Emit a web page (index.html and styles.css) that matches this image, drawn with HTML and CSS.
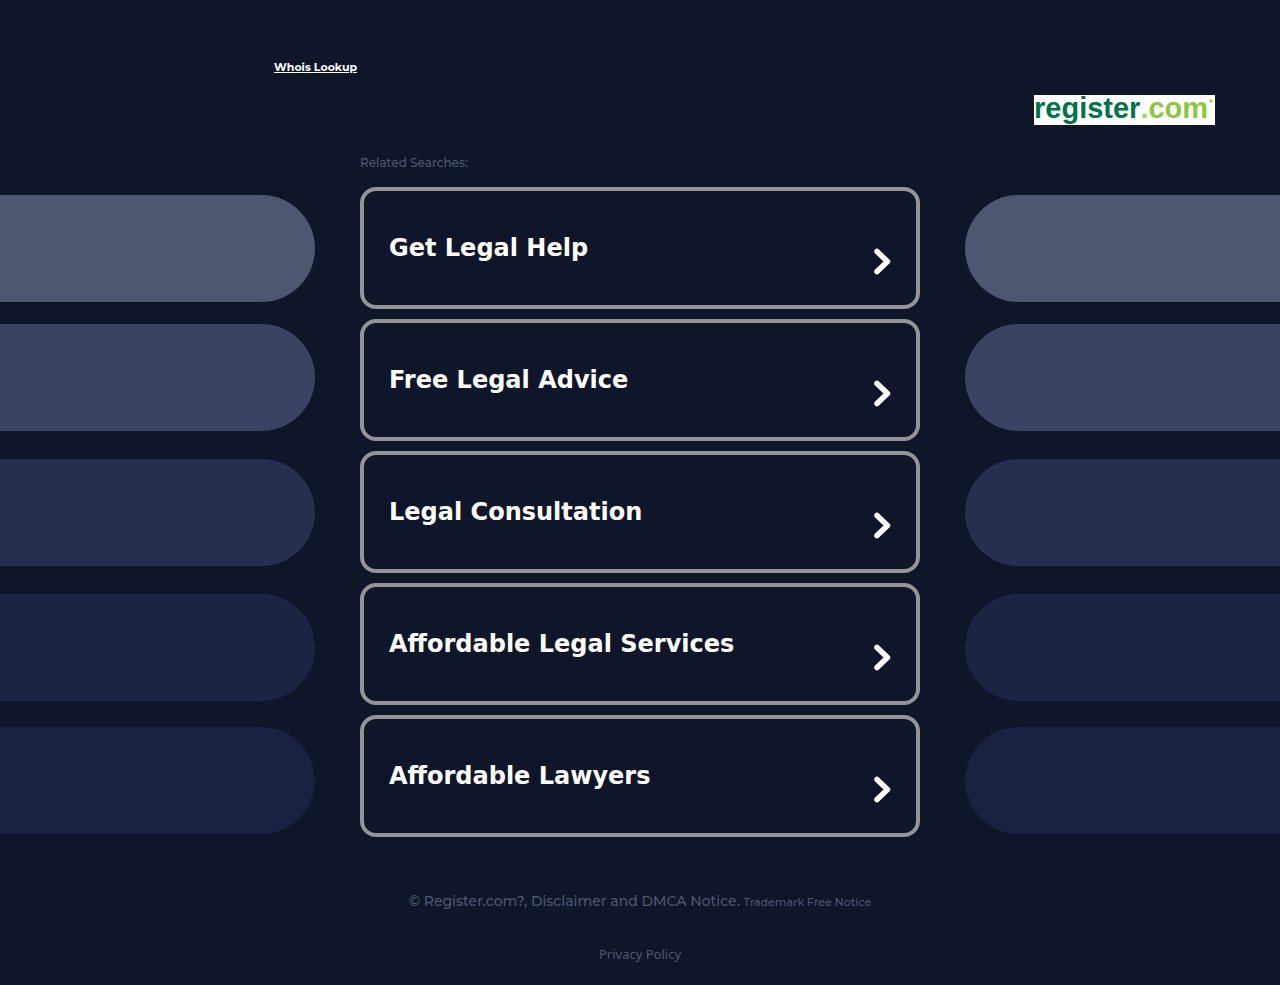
FILE: index.html
```html
<!DOCTYPE html>
<html lang="en">
  <head>
    <meta charset="UTF-8">
    <meta name="viewport" content="width=device-width, initial-scale=1">
    <title>Related Searches</title>
    <link rel="stylesheet" href="styles.css">
  </head>
  <body>
    <header class="header">
      <a class="whois" href="#">Whois Lookup</a>
      <a class="logo" href="#"><span class="logo-name">register</span><span class="logo-dot">.</span><span class="logo-tld">com</span><span class="logo-mark"></span></a>
    </header>

    <div class="content">
      <div class="pills pills-left">
        <div class="pill level-1"></div>
        <div class="pill level-2"></div>
        <div class="pill level-3"></div>
        <div class="pill level-4"></div>
        <div class="pill level-5"></div>
      </div>

      <main class="searches">
        <h1 class="searches-title">Related Searches:</h1>
        <ul class="search-list">
          <li>
            <a class="search" href="#">
              <span class="search-text">Get Legal Help</span>
              <svg class="arrow" viewBox="0 0 18 28" aria-hidden="true"><path d="M3 3.5L13.5 13.5L3 23.5"/></svg>
            </a>
          </li>
          <li>
            <a class="search" href="#">
              <span class="search-text">Free Legal Advice</span>
              <svg class="arrow" viewBox="0 0 18 28" aria-hidden="true"><path d="M3 3.5L13.5 13.5L3 23.5"/></svg>
            </a>
          </li>
          <li>
            <a class="search" href="#">
              <span class="search-text">Legal Consultation</span>
              <svg class="arrow" viewBox="0 0 18 28" aria-hidden="true"><path d="M3 3.5L13.5 13.5L3 23.5"/></svg>
            </a>
          </li>
          <li>
            <a class="search" href="#">
              <span class="search-text">Affordable Legal Services</span>
              <svg class="arrow" viewBox="0 0 18 28" aria-hidden="true"><path d="M3 3.5L13.5 13.5L3 23.5"/></svg>
            </a>
          </li>
          <li>
            <a class="search" href="#">
              <span class="search-text">Affordable Lawyers</span>
              <svg class="arrow" viewBox="0 0 18 28" aria-hidden="true"><path d="M3 3.5L13.5 13.5L3 23.5"/></svg>
            </a>
          </li>
        </ul>
      </main>

      <div class="pills pills-right">
        <div class="pill level-1"></div>
        <div class="pill level-2"></div>
        <div class="pill level-3"></div>
        <div class="pill level-4"></div>
        <div class="pill level-5"></div>
      </div>
    </div>

    <footer class="footer">
      <p class="copyright">© Register.com?, Disclaimer and DMCA Notice. <a class="trademark" href="#">Trademark Free Notice</a></p>
      <a class="privacy" href="#">Privacy Policy</a>
    </footer>
  </body>
</html>
```

FILE: styles.css
```css
* {
  margin: 0;
  padding: 0;
  box-sizing: border-box;
}

body {
  background: #10162a;
  color: #4e5672;
  font-family: Montserrat, Inter, sans-serif;
  overflow-x: hidden;
}

.header {
  display: flex;
  flex-direction: column;
  padding: 60px 65px 0 274px;
}

.whois {
  align-self: flex-start;
  color: #fff;
  font-size: 11px;
  font-weight: 700;
  line-height: 15px;
}

/* logo */
.logo {
  align-self: flex-end;
  display: flex;
  width: 181px;
  height: 30px;
  margin-top: 20px;
  background: #fff;
  font-family: "Liberation Sans", sans-serif;
  font-size: 29px;
  font-weight: 700;
  line-height: 27px;
  text-decoration: none;
}

.logo-name {
  color: #00734a;
}

.logo-dot {
  color: #a8d46f;
}

.logo-tld {
  color: #8dc63f;
}

.logo-mark {
  width: 4px;
  height: 4px;
  margin: 4px 2px 0 auto;
  border-radius: 50%;
  background: #b5da80;
}

/* three columns: pills, list, pills */
.content {
  display: grid;
  grid-template-columns: 1fr minmax(auto, 560px) 1fr;
  column-gap: 45px;
}

.pills {
  display: grid;
  grid-template-rows: 129px 135px 135px 133px 107px;
  align-content: start;
  padding-top: 70px;
}

.pill {
  height: 107px;
}

.pills-left .pill {
  border-radius: 0 54px 54px 0;
}

.pills-right .pill {
  border-radius: 54px 0 0 54px;
}

.level-1 {
  background: #4e5672;
}

.level-2 {
  background: #3b4262;
}

.level-3 {
  background: #262f4e;
}

.level-4 {
  background: #1b2443;
}

.level-5 {
  background: #1a2242;
}

.searches {
  padding-top: 30px;
}

.searches-title {
  margin-bottom: 17px;
  font-size: 12px;
  font-weight: 500;
  line-height: 15px;
}

.search-list {
  display: flex;
  flex-direction: column;
  gap: 10px;
  list-style: none;
}

.search {
  display: flex;
  justify-content: space-between;
  align-items: flex-start;
  padding: 43px 24px 42px 25px;
  border: 4px solid #959597;
  border-radius: 16px;
  color: #fff;
  font-family: "DejaVu Sans", sans-serif;
  font-size: 24px;
  font-weight: 700;
  line-height: 29px;
  text-decoration: none;
}

.arrow {
  width: 18px;
  height: 28px;
  margin-top: 14px;
  margin-bottom: -13px;
  fill: none;
  stroke: #fff;
  stroke-width: 5.5;
  stroke-linecap: round;
  stroke-linejoin: round;
}

.footer {
  display: flex;
  flex-direction: column;
  align-items: center;
  padding: 54px 20px 20px;
}

.copyright {
  font-size: 14px;
  font-weight: 500;
  line-height: 20px;
}

.trademark {
  color: inherit;
  font-size: 11px;
  text-decoration: none;
}

.privacy {
  margin-top: 34px;
  color: inherit;
  font-family: "Noto Sans", sans-serif;
  font-size: 13px;
  line-height: 16px;
  text-decoration: none;
}
```
